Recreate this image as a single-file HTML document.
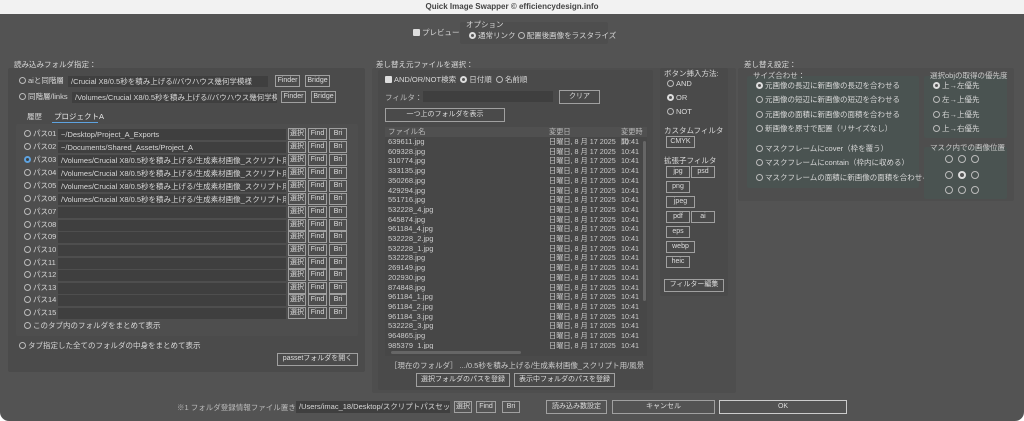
<!DOCTYPE html>
<html><head><meta charset="utf-8">
<style>
*{box-sizing:border-box;margin:0;padding:0}
body{width:1024px;height:421px;background:#fff;overflow:hidden;position:relative;font-family:"Liberation Sans","Noto Sans CJK JP",sans-serif;color:#d8d8d8;font-size:7.5px}
#title{position:absolute;left:0;top:0;width:1024px;height:14px;background:#f2f2f2;color:#444;font-weight:bold;font-size:8px;text-align:center;line-height:14px}
#win{position:absolute;left:0;top:14px;width:1024px;height:407px;background:#535353;border-radius:0 0 9px 9px}
.a{position:absolute;white-space:nowrap;line-height:1}
.p{position:absolute;background:#4b4b4b;border-radius:2px}
.g{position:absolute;background:#4a5351;border-radius:2px}
.in{position:absolute;background:#3f3f3f;height:11px;color:#d8d8d8;font-size:7.5px;line-height:11px;padding-left:3px;overflow:hidden;white-space:nowrap}
.b{position:absolute;border:1px solid #a0a0a0;height:12px;text-align:center;line-height:10px;font-size:7px;color:#ddd;white-space:nowrap;overflow:hidden}
.r{display:inline-block;width:7px;height:7px;border:1px solid #bbb;border-radius:50%;vertical-align:-1px;margin-right:2px}
.r.on{border:2px solid #ddd;background:#555}
.rb{border-color:#5ea3e0!important;background:#3f3f3f;border-width:2px!important}
.c{display:inline-block;width:7px;height:7px;background:#ddd;border-radius:1px;vertical-align:-1px;margin-right:2px}
.row{position:absolute;left:0;width:262px;height:9.7px;font-size:7.5px;line-height:9.7px;color:#ccc}
.row span{position:absolute}
.row span+span{font-size:7.2px}
.ci{position:absolute;width:8px;height:8px;border:1px solid #bbb;border-radius:50%}
.ci.on{border:2px solid #ddd;background:#555}
</style></head><body>
<div id="title">Quick Image Swapper © efficiencydesign.info</div>
<div id="win"></div>

<div class="a" style="left:413px;top:29px"><span class="c"></span>プレビュー</div>
<div class="p" style="left:460px;top:22px;width:148px;height:22px;background:#4e4e4e"></div>
<div class="a" style="left:466px;top:21px">オプション</div>
<div class="a" style="left:469px;top:32px"><span class="r on"></span>通常リンク <span class="r"></span>配置後画像をラスタライズ</div>

<div class="a" style="left:14px;top:61px">読み込みフォルダ指定：</div>
<div class="p" style="left:8px;top:68px;width:357px;height:304px"></div>
<div class="a" style="left:19px;top:77px"><span class="r"></span>aiと同階層</div>
<div class="in" style="left:68px;top:76px;width:200px">/Crucial X8/0.5秒を積み上げる//バウハウス幾何学模様</div>
<div class="b" style="left:275px;top:75px;width:25px">Finder</div>
<div class="b" style="left:305px;top:75px;width:25px">Bridge</div>
<div class="a" style="left:19px;top:93px"><span class="r"></span>同階層/links</div>
<div class="in" style="left:72px;top:92px;width:205px">/Volumes/Crucial X8/0.5秒を積み上げる//バウハウス幾何学模様/</div>
<div class="b" style="left:281px;top:91px;width:25px">Finder</div>
<div class="b" style="left:311px;top:91px;width:25px">Bridge</div>
<div class="a" style="left:27px;top:113px">履歴</div>
<div class="a" style="left:54px;top:113px;color:#e8e8e8">プロジェクトA</div>
<div style="position:absolute;left:52px;top:122px;width:46px;height:1px;background:#5ea3e0"></div>
<div class="p" style="left:16px;top:124px;width:342px;height:212px;background:#4e4e4e"></div>

<div class="a" style="left:24px;top:130px"><span class="r"></span>パス01</div><div class="in" style="left:58px;top:129px;width:228px">~/Desktop/Project_A_Exports</div>
<div class="a" style="left:24px;top:143px"><span class="r"></span>パス02</div><div class="in" style="left:58px;top:142px;width:228px">~/Documents/Shared_Assets/Project_A</div>
<div class="a" style="left:24px;top:156px"><span class="r rb"></span>パス03</div><div class="in" style="left:58px;top:155px;width:228px">/Volumes/Crucial X8/0.5秒を積み上げる/生成素材画像_スクリプト用/風景</div>
<div class="a" style="left:24px;top:169px"><span class="r"></span>パス04</div><div class="in" style="left:58px;top:168px;width:228px">/Volumes/Crucial X8/0.5秒を積み上げる/生成素材画像_スクリプト用/フ</div>
<div class="a" style="left:24px;top:182px"><span class="r"></span>パス05</div><div class="in" style="left:58px;top:181px;width:228px">/Volumes/Crucial X8/0.5秒を積み上げる/生成素材画像_スクリプト用/エ</div>
<div class="a" style="left:24px;top:195px"><span class="r"></span>パス06</div><div class="in" style="left:58px;top:194px;width:228px">/Volumes/Crucial X8/0.5秒を積み上げる/生成素材画像_スクリプト用/フ</div>
<div class="a" style="left:24px;top:208px"><span class="r"></span>パス07</div><div class="in" style="left:58px;top:207px;width:228px"></div>
<div class="a" style="left:24px;top:221px"><span class="r"></span>パス08</div><div class="in" style="left:58px;top:220px;width:228px"></div>
<div class="a" style="left:24px;top:233px"><span class="r"></span>パス09</div><div class="in" style="left:58px;top:232px;width:228px"></div>
<div class="a" style="left:24px;top:246px"><span class="r"></span>パス10</div><div class="in" style="left:58px;top:245px;width:228px"></div>
<div class="a" style="left:24px;top:259px"><span class="r"></span>パス11</div><div class="in" style="left:58px;top:258px;width:228px"></div>
<div class="a" style="left:24px;top:271px"><span class="r"></span>パス12</div><div class="in" style="left:58px;top:270px;width:228px"></div>
<div class="a" style="left:24px;top:284px"><span class="r"></span>パス13</div><div class="in" style="left:58px;top:283px;width:228px"></div>
<div class="a" style="left:24px;top:296px"><span class="r"></span>パス14</div><div class="in" style="left:58px;top:295px;width:228px"></div>
<div class="a" style="left:24px;top:309px"><span class="r"></span>パス15</div><div class="in" style="left:58px;top:308px;width:228px"></div>

<div class="b" style="left:288px;top:128px;width:18px">選択</div><div class="b" style="left:308px;top:128px;width:19px">Find</div><div class="b" style="left:329px;top:128px;width:18px">Bri</div>
<div class="b" style="left:288px;top:141px;width:18px">選択</div><div class="b" style="left:308px;top:141px;width:19px">Find</div><div class="b" style="left:329px;top:141px;width:18px">Bri</div>
<div class="b" style="left:288px;top:154px;width:18px">選択</div><div class="b" style="left:308px;top:154px;width:19px">Find</div><div class="b" style="left:329px;top:154px;width:18px">Bri</div>
<div class="b" style="left:288px;top:167px;width:18px">選択</div><div class="b" style="left:308px;top:167px;width:19px">Find</div><div class="b" style="left:329px;top:167px;width:18px">Bri</div>
<div class="b" style="left:288px;top:180px;width:18px">選択</div><div class="b" style="left:308px;top:180px;width:19px">Find</div><div class="b" style="left:329px;top:180px;width:18px">Bri</div>
<div class="b" style="left:288px;top:193px;width:18px">選択</div><div class="b" style="left:308px;top:193px;width:19px">Find</div><div class="b" style="left:329px;top:193px;width:18px">Bri</div>
<div class="b" style="left:288px;top:206px;width:18px">選択</div><div class="b" style="left:308px;top:206px;width:19px">Find</div><div class="b" style="left:329px;top:206px;width:18px">Bri</div>
<div class="b" style="left:288px;top:219px;width:18px">選択</div><div class="b" style="left:308px;top:219px;width:19px">Find</div><div class="b" style="left:329px;top:219px;width:18px">Bri</div>
<div class="b" style="left:288px;top:231px;width:18px">選択</div><div class="b" style="left:308px;top:231px;width:19px">Find</div><div class="b" style="left:329px;top:231px;width:18px">Bri</div>
<div class="b" style="left:288px;top:244px;width:18px">選択</div><div class="b" style="left:308px;top:244px;width:19px">Find</div><div class="b" style="left:329px;top:244px;width:18px">Bri</div>
<div class="b" style="left:288px;top:257px;width:18px">選択</div><div class="b" style="left:308px;top:257px;width:19px">Find</div><div class="b" style="left:329px;top:257px;width:18px">Bri</div>
<div class="b" style="left:288px;top:269px;width:18px">選択</div><div class="b" style="left:308px;top:269px;width:19px">Find</div><div class="b" style="left:329px;top:269px;width:18px">Bri</div>
<div class="b" style="left:288px;top:282px;width:18px">選択</div><div class="b" style="left:308px;top:282px;width:19px">Find</div><div class="b" style="left:329px;top:282px;width:18px">Bri</div>
<div class="b" style="left:288px;top:294px;width:18px">選択</div><div class="b" style="left:308px;top:294px;width:19px">Find</div><div class="b" style="left:329px;top:294px;width:18px">Bri</div>
<div class="b" style="left:288px;top:307px;width:18px">選択</div><div class="b" style="left:308px;top:307px;width:19px">Find</div><div class="b" style="left:329px;top:307px;width:18px">Bri</div>

<div class="a" style="left:24px;top:322px"><span class="r"></span>このタブ内のフォルダをまとめて表示</div>
<div class="a" style="left:19px;top:342px"><span class="r"></span>タブ指定した全てのフォルダの中身をまとめて表示</div>
<div class="b" style="left:277px;top:353px;width:81px;height:13px">passetフォルダを開く</div>

<div class="a" style="left:376px;top:61px">差し替え元ファイルを選択：</div>
<div class="p" style="left:372px;top:68px;width:364px;height:325px;background:#4e4e4e"></div>
<div class="p" style="left:378px;top:70px;width:275px;height:320px;background:#4a4a4a"></div>
<div class="a" style="left:385px;top:76px"><span class="c"></span>AND/OR/NOT検索 &nbsp;<span class="r on"></span>日付順 &nbsp;<span class="r"></span>名前順</div>
<div class="a" style="left:385px;top:94px;color:#bbb">フィルタ：</div>
<div class="in" style="left:423px;top:91px;width:130px"></div>
<div class="b" style="left:559px;top:90px;width:41px;height:14px;line-height:12px">クリア</div>
<div class="b" style="left:385px;top:108px;width:120px;height:14px;line-height:12px">一つ上のフォルダを表示</div>
<div style="position:absolute;left:385px;top:127px;width:262px;height:229px;background:#474747;overflow:hidden">
<div class="row" style="top:0;background:#505050;color:#bbb"><span style="left:3px">ファイル名</span><span style="left:164px">変更日</span><span style="left:236px">変更時間</span></div>
<div class="row" style="top:10px"><span style="left:3px">639611.jpg</span><span style="left:164px">日曜日, 8 月 17 2025</span><span style="left:236px">10:41</span></div>
<div class="row" style="top:19.7px"><span style="left:3px">609328.jpg</span><span style="left:164px">日曜日, 8 月 17 2025</span><span style="left:236px">10:41</span></div>
<div class="row" style="top:29.4px"><span style="left:3px">310774.jpg</span><span style="left:164px">日曜日, 8 月 17 2025</span><span style="left:236px">10:41</span></div>
<div class="row" style="top:39.1px"><span style="left:3px">333135.jpg</span><span style="left:164px">日曜日, 8 月 17 2025</span><span style="left:236px">10:41</span></div>
<div class="row" style="top:48.8px"><span style="left:3px">350268.jpg</span><span style="left:164px">日曜日, 8 月 17 2025</span><span style="left:236px">10:41</span></div>
<div class="row" style="top:58.5px"><span style="left:3px">429294.jpg</span><span style="left:164px">日曜日, 8 月 17 2025</span><span style="left:236px">10:41</span></div>
<div class="row" style="top:68.2px"><span style="left:3px">551716.jpg</span><span style="left:164px">日曜日, 8 月 17 2025</span><span style="left:236px">10:41</span></div>
<div class="row" style="top:77.9px"><span style="left:3px">532228_4.jpg</span><span style="left:164px">日曜日, 8 月 17 2025</span><span style="left:236px">10:41</span></div>
<div class="row" style="top:87.6px"><span style="left:3px">645874.jpg</span><span style="left:164px">日曜日, 8 月 17 2025</span><span style="left:236px">10:41</span></div>
<div class="row" style="top:97.3px"><span style="left:3px">961184_4.jpg</span><span style="left:164px">日曜日, 8 月 17 2025</span><span style="left:236px">10:41</span></div>
<div class="row" style="top:107px"><span style="left:3px">532228_2.jpg</span><span style="left:164px">日曜日, 8 月 17 2025</span><span style="left:236px">10:41</span></div>
<div class="row" style="top:116.7px"><span style="left:3px">532228_1.jpg</span><span style="left:164px">日曜日, 8 月 17 2025</span><span style="left:236px">10:41</span></div>
<div class="row" style="top:126.4px"><span style="left:3px">532228.jpg</span><span style="left:164px">日曜日, 8 月 17 2025</span><span style="left:236px">10:41</span></div>
<div class="row" style="top:136.1px"><span style="left:3px">269149.jpg</span><span style="left:164px">日曜日, 8 月 17 2025</span><span style="left:236px">10:41</span></div>
<div class="row" style="top:145.8px"><span style="left:3px">202930.jpg</span><span style="left:164px">日曜日, 8 月 17 2025</span><span style="left:236px">10:41</span></div>
<div class="row" style="top:155.5px"><span style="left:3px">874848.jpg</span><span style="left:164px">日曜日, 8 月 17 2025</span><span style="left:236px">10:41</span></div>
<div class="row" style="top:165.2px"><span style="left:3px">961184_1.jpg</span><span style="left:164px">日曜日, 8 月 17 2025</span><span style="left:236px">10:41</span></div>
<div class="row" style="top:174.9px"><span style="left:3px">961184_2.jpg</span><span style="left:164px">日曜日, 8 月 17 2025</span><span style="left:236px">10:41</span></div>
<div class="row" style="top:184.6px"><span style="left:3px">961184_3.jpg</span><span style="left:164px">日曜日, 8 月 17 2025</span><span style="left:236px">10:41</span></div>
<div class="row" style="top:194.3px"><span style="left:3px">532228_3.jpg</span><span style="left:164px">日曜日, 8 月 17 2025</span><span style="left:236px">10:41</span></div>
<div class="row" style="top:204px"><span style="left:3px">964865.jpg</span><span style="left:164px">日曜日, 8 月 17 2025</span><span style="left:236px">10:41</span></div>
<div class="row" style="top:213.7px"><span style="left:3px">985379_1.jpg</span><span style="left:164px">日曜日, 8 月 17 2025</span><span style="left:236px">10:41</span></div>
<div style="position:absolute;left:0;top:222px;width:262px;height:7px;background:#474747"></div>
<div style="position:absolute;left:6px;top:224px;width:130px;height:3px;background:#666;border-radius:2px"></div>
<div style="position:absolute;left:258px;top:14px;width:3px;height:160px;background:#666;border-radius:2px"></div>
</div>
<div class="a" style="left:390px;top:362px;color:#ccc">［現在のフォルダ］ .../0.5秒を積み上げる/生成素材画像_スクリプト用/風景</div>
<div class="b" style="left:416px;top:373px;width:94px;height:14px;line-height:12px">選択フォルダのパスを登録</div>
<div class="b" style="left:514px;top:373px;width:101px;height:14px;line-height:12px">表示中フォルダのパスを登録</div>

<div class="p" style="left:660px;top:68px;width:68px;height:228px;background:#4a4a4a"></div>
<div class="a" style="left:664px;top:70px">ボタン挿入方法:</div>
<div class="a" style="left:667px;top:80px"><span class="r"></span>AND</div>
<div class="a" style="left:667px;top:94px"><span class="r on"></span>OR</div>
<div class="a" style="left:667px;top:108px"><span class="r"></span>NOT</div>
<div class="a" style="left:664px;top:127px">カスタムフィルタ</div>
<div class="b" style="left:666px;top:136px;width:29px">CMYK</div>
<div class="a" style="left:664px;top:157px">拡張子フィルタ</div>
<div class="b" style="left:666px;top:166px;width:24px">jpg</div><div class="b" style="left:691px;top:166px;width:24px">psd</div>
<div class="b" style="left:666px;top:181px;width:24px">png</div>
<div class="b" style="left:666px;top:196px;width:29px">jpeg</div>
<div class="b" style="left:666px;top:211px;width:24px">pdf</div><div class="b" style="left:691px;top:211px;width:24px">ai</div>
<div class="b" style="left:666px;top:226px;width:24px">eps</div>
<div class="b" style="left:666px;top:241px;width:29px">webp</div>
<div class="b" style="left:666px;top:256px;width:24px">heic</div>
<div class="b" style="left:664px;top:279px;width:60px;height:13px">フィルター編集</div>

<div class="a" style="left:744px;top:61px">差し替え設定：</div>
<div class="p" style="left:738px;top:68px;width:276px;height:133px;background:#4e4e4e"></div>
<div class="g" style="left:747px;top:76px;width:172px;height:112px"></div>
<div class="a" style="left:753px;top:72px;color:#ccc">サイズ合わせ：</div>
<div class="a" style="left:756px;top:82px"><span class="r on"></span>元画像の長辺に新画像の長辺を合わせる</div>
<div class="a" style="left:756px;top:96px"><span class="r"></span>元画像の短辺に新画像の短辺を合わせる</div>
<div class="a" style="left:756px;top:111px"><span class="r"></span>元画像の面積に新画像の面積を合わせる</div>
<div class="a" style="left:756px;top:125px"><span class="r"></span>新画像を原寸で配置（リサイズなし）</div>
<div class="a" style="left:756px;top:145px"><span class="r"></span>マスクフレームにcover（枠を覆う）</div>
<div class="a" style="left:756px;top:159px"><span class="r"></span>マスクフレームにcontain（枠内に収める）</div>
<div class="a" style="left:756px;top:174px"><span class="r"></span>マスクフレームの面積に新画像の面積を合わせる</div>
<div class="g" style="left:924px;top:76px;width:83px;height:62px"></div>
<div class="a" style="left:930px;top:72px;color:#ccc">選択objの取得の優先度</div>
<div class="a" style="left:933px;top:82px"><span class="r on"></span>上→左優先</div>
<div class="a" style="left:933px;top:96px"><span class="r"></span>左→上優先</div>
<div class="a" style="left:933px;top:111px"><span class="r"></span>右→上優先</div>
<div class="a" style="left:933px;top:125px"><span class="r"></span>上→右優先</div>
<div class="g" style="left:924px;top:147px;width:83px;height:52px"></div>
<div class="a" style="left:930px;top:144px;color:#ccc">マスク内での画像位置</div>
<div class="ci" style="left:945px;top:155px"></div><div class="ci" style="left:958px;top:155px"></div><div class="ci" style="left:971px;top:155px"></div>
<div class="ci" style="left:945px;top:171px"></div><div class="ci on" style="left:958px;top:171px"></div><div class="ci" style="left:971px;top:171px"></div>
<div class="ci" style="left:945px;top:186px"></div><div class="ci" style="left:958px;top:186px"></div><div class="ci" style="left:971px;top:186px"></div>

<div class="a" style="left:177px;top:404px;color:#bbb">※1 フォルダ登録情報ファイル置き場:</div>
<div class="in" style="left:296px;top:401px;width:154px;height:12px">/Users/imac_18/Desktop/スクリプトパスセット</div>
<div class="b" style="left:454px;top:401px;width:18px">選択</div>
<div class="b" style="left:476px;top:401px;width:20px">Find</div>
<div class="b" style="left:502px;top:401px;width:18px">Bri</div>
<div class="b" style="left:546px;top:400px;width:61px;height:14px;line-height:12px">読み込み数設定</div>
<div class="b" style="left:612px;top:400px;width:103px;height:14px;line-height:12px">キャンセル</div>
<div class="b" style="left:719px;top:400px;width:128px;height:14px;line-height:12px;border-color:#ccc">OK</div>
</body></html>
